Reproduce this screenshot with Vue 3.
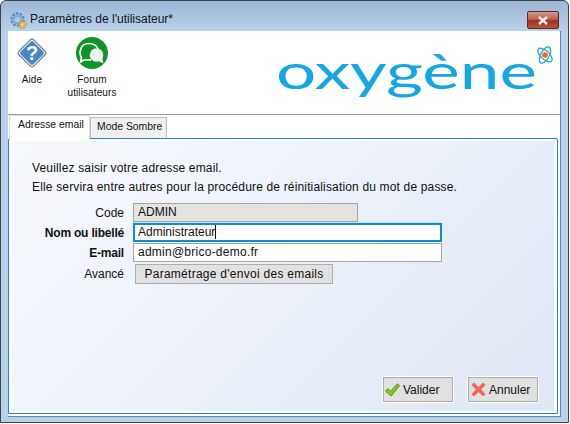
<template>
  <div class="window">
    <div class="titlebar">
      <svg class="app-icon" width="17" height="17" viewBox="0 0 17 17">
        <circle cx="7.5" cy="7.5" r="6" fill="none" stroke="#4f86bf" stroke-width="2.4" stroke-dasharray="2.4 1.3" />
        <circle cx="7.5" cy="7.5" r="4" fill="none" stroke="#7fabd6" stroke-width="2.4" />
        <circle cx="12.5" cy="12.5" r="3.6" fill="none" stroke="#e39a1e" stroke-width="1.4" stroke-dasharray="1.6 .7" />
        <circle cx="12.5" cy="12.5" r="2.4" fill="#f0b335" />
        <circle cx="12.5" cy="12.5" r="1" fill="#fff1c4" />
      </svg>
      <span class="title">Paramètres de l'utilisateur*</span>
      <div class="close">
        <svg width="12" height="9" viewBox="0 0 12 9">
          <path d="M2 1 L10 8 M10 1 L2 8" stroke="#f4f4f4" stroke-width="2.4" />
        </svg>
      </div>
    </div>
    <div class="client">
      <div class="toolbar">
        <div class="tool tool-help">
          <svg width="32" height="32" viewBox="0 0 32 32">
            <rect x="5.5" y="5.5" width="21" height="21" rx="2.5" transform="rotate(45 16 16)" fill="#fff" stroke="#6f7f90" stroke-width="1.2" />
            <rect x="7" y="7" width="18" height="18" rx="2" transform="rotate(45 16 16)" fill="#4a85c4" />
            <text x="16" y="23" class="help-mark" text-anchor="middle">?</text>
          </svg>
          <span>Aide</span>
        </div>
        <div class="tool tool-forum">
          <svg width="32" height="32" viewBox="0 0 32 32">
            <circle cx="16" cy="16" r="16" fill="#0f9428" />
            <path d="M15 23 H8 L4.5 25 L5.5 20.5 C3 17 3.5 6.5 12.5 6.5 C17.5 6.5 21 9 22 12" fill="none" stroke="#fff" stroke-width="1.7" stroke-linejoin="round" />
            <circle cx="20.5" cy="18" r="6.8" fill="#eef2ec" />
            <path d="M22 24 L27.5 26.5 L26 20z" fill="#eef2ec" />
          </svg>
          <span>Forum<br />utilisateurs</span>
        </div>
        <span class="logo-text">oxygène</span>
        <svg class="atom" width="18" height="20" viewBox="0 0 18 20">
          <ellipse cx="9" cy="10" rx="4.2" ry="9" transform="rotate(28 9 10)" fill="none" stroke="#1ca4df" stroke-width="1.3" />
          <ellipse cx="9" cy="10" rx="4.2" ry="9" transform="rotate(-48 9 10)" fill="none" stroke="#1ca4df" stroke-width="1.3" />
          <circle cx="9" cy="10" r="2.8" fill="#f4640f" />
        </svg>
      </div>
      <div class="tabs">
        <div class="tab active">Adresse email</div>
        <div class="tab">Mode Sombre</div>
      </div>
      <div class="panel">
        <div class="panel-body">
          <p class="intro">Veuillez saisir votre adresse email.</p>
          <p class="intro">Elle servira entre autres pour la procédure de réinitialisation du mot de passe.</p>
          <div class="form">
            <label>Code</label>
            <div class="field readonly">ADMIN</div>
            <label class="strong">Nom ou libellé</label>
            <div class="field focused">Administrateur<i class="caret"></i></div>
            <label class="strong">E-mail</label>
            <div class="field mail">admin@brico-demo.fr</div>
            <label>Avancé</label>
            <button class="btn send">Paramétrage d'envoi des emails</button>
          </div>
          <div class="actions">
            <button class="btn action">
              <svg class="ok-icon" width="17" height="16" viewBox="0 0 18 16">
                <path d="M1.5 9 L4.5 6.5 L7 9.5 L14 1.5 L16.5 3.5 L7.5 14.5z" fill="#8fc31f" stroke="#5f8f12" stroke-width="1" />
              </svg>
              Valider
            </button>
            <button class="btn action">
              <svg class="cancel-icon" width="15" height="15" viewBox="0 0 16 16">
                <path d="M3 1 L8 5.5 L13 1 L15 3 L10.5 8 L15 13 L13 15 L8 10.5 L3 15 L1 13 L5.5 8 L1 3z" fill="#f4645c" stroke="#d8736c" stroke-width="1" />
              </svg>
              Annuler
            </button>
          </div>
        </div>
      </div>
    </div>
  </div>
</template>

<script setup>
</script>

<style>
html,
body {
  margin: 0;
  background: #fff;
}
</style>

<style scoped>
.window {
  width: 569px;
  height: 423px;
  box-sizing: border-box;
  display: flex;
  flex-direction: column;
  border: 1px solid #3c4248;
  border-radius: 6px 6px 0 0;
  background: linear-gradient(#9cb7d4, #b9d1e9 30px);
  padding: 0 7px 5px 7px;
  font-family: "Liberation Sans", Arial, sans-serif;
  font-size: 12px;
  color: #111;
}

.titlebar {
  height: 30px;
  flex: none;
  display: flex;
  align-items: center;
  gap: 3px;
  padding-left: 2px;
}

.app-icon {
  margin-top: 8px;
}

.title {
  margin-top: 6px;
  color: #10161c;
}

.close {
  margin-left: auto;
  margin-top: 8px;
  margin-right: 2px;
  width: 32px;
  height: 18px;
  box-sizing: border-box;
  border: 1px solid #5d2a26;
  border-radius: 2px;
  background: linear-gradient(#d59a90, #c0604e 45%, #a32d1d 55%, #b9543f);
  display: flex;
  align-items: center;
  justify-content: center;
}

.client {
  flex: 1;
  display: flex;
  flex-direction: column;
  background: #fff;
  border-right: 1px solid #5f87ab;
  border-bottom: 1px solid #5f87ab;
  min-height: 0;
}

.toolbar {
  height: 84px;
  flex: none;
  display: flex;
  position: relative;
  border-bottom: 1px solid #a0a0a0;
  box-sizing: border-box;
  font-size: 10px;
  text-align: center;
}

.tool {
  display: flex;
  flex-direction: column;
  align-items: center;
  padding-top: 6px;
  line-height: 13px;
}

.tool span {
  margin-top: 4px;
  letter-spacing: 0.1px;
}

.tool-help {
  width: 40px;
  margin-left: 4px;
}

.tool-forum {
  width: 60px;
  margin-left: 10px;
}

.help-mark {
  font: bold 20px "Liberation Sans", sans-serif;
  fill: #fff;
}

.logo-text {
  position: absolute;
  left: 268px;
  top: 10px;
  font-family: Lato, sans-serif;
  font-size: 48px;
  line-height: 60px;
  color: #16a6e3;
  transform: scaleX(1.48);
  transform-origin: left;
}

.atom {
  position: absolute;
  left: 528px;
  top: 14px;
}

.tabs {
  display: flex;
  align-items: flex-end;
  height: 23px;
  flex: none;
  padding-left: 1px;
  font-size: 10.4px;
}

.tab {
  width: 77px;
  height: 21px;
  line-height: 18px;
  padding-left: 6px;
  background: #f0f0f0;
  border: 1px solid #bdbdbd;
  border-bottom: none;
  box-sizing: border-box;
}

.tab.active {
  width: 81px;
  height: 24px;
  padding-left: 8px;
  background: #fff;
  border-color: #d9d9d9;
  margin-bottom: -1px;
  position: relative;
  z-index: 1;
}

.panel {
  flex: 1;
  margin: 0 2px 2px 0;
  border: 1px solid #2a86c4;
  border-radius: 2px 2px 0 0;
  padding: 2px 3px;
  background: #fff;
  min-height: 0;
  display: flex;
}

.panel-body {
  flex: 1;
  background: linear-gradient(135deg, #f7f9fd, #dfe7f4);
  padding: 20px 15px 8px 20px;
  display: flex;
  flex-direction: column;
}

.intro {
  margin: 0 0 5px;
  line-height: 14px;
  letter-spacing: 0.16px;
}

.form {
  display: grid;
  grid-template-columns: 92px auto;
  justify-content: start;
  align-items: center;
  column-gap: 9px;
  margin-top: 4px;
}

.form label {
  text-align: right;
}

.strong {
  font-weight: bold;
  letter-spacing: -0.2px;
}

.field {
  width: 309px;
  height: 19px;
  box-sizing: border-box;
  border: 1px solid #a5a5a5;
  background: #fff;
  line-height: 17px;
  padding-left: 4px;
  margin-bottom: 1px;
  white-space: nowrap;
}

.readonly {
  width: 225px;
  background: #e5e3df;
}

.focused {
  border: 2px solid #0b8fd1;
  line-height: 15px;
  padding-left: 3px;
  box-shadow: 0 -1px 0 #bfe3f5;
}

.mail {
  letter-spacing: 0.25px;
}

.caret {
  display: inline-block;
  width: 1px;
  height: 14px;
  background: #111;
  vertical-align: -3px;
}

.btn {
  font: inherit;
  color: inherit;
  background: #e1e1e1;
  border: 1px solid #adadad;
  box-sizing: border-box;
  padding: 0;
}

.send {
  width: 198px;
  height: 20px;
  margin: 1px 0 0 2px;
  letter-spacing: 0.27px;
}

.actions {
  margin-top: auto;
  display: flex;
  justify-content: flex-end;
  gap: 13px;
}

.action {
  width: 72px;
  height: 27px;
  display: flex;
  align-items: center;
  padding-left: 1px;
  border-color: #fff;
  box-shadow: inset 0 0 0 1px #adadad;
}

.ok-icon {
  margin-right: 2px;
}

.cancel-icon {
  margin: 0 3px 0 2px;
}
</style>
